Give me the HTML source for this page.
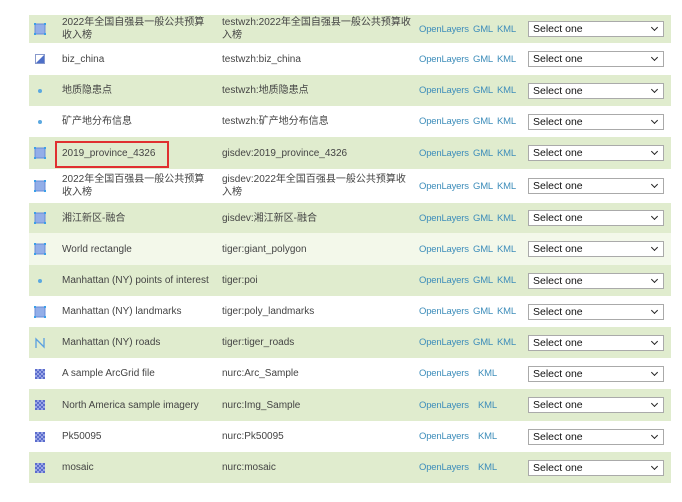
<!DOCTYPE html>
<html><head><meta charset="utf-8"><style>
body{margin:0;width:682px;height:502px;background:#fff;overflow:hidden;font-family:"Liberation Sans","Noto Sans CJK SC",sans-serif;font-size:10px;color:#444}
.r{position:absolute;left:29px;width:642px}
.g{background:#e0ecce}.p{background:#f3f8ea}
.c{position:absolute;top:0;bottom:0;display:flex;align-items:center;line-height:13px}
.n{left:33px;width:150px}.w{left:193px;width:190px}
.a{position:absolute;top:0;bottom:0;display:flex;align-items:center;color:#3d8dba;font-size:9.5px;letter-spacing:-0.2px}
.s{position:absolute;left:499px;width:136px;top:50%;margin-top:-8px;background:#fff;border:1px solid #aaa;font-size:10.5px;color:#111;line-height:14px;padding-left:4px;box-sizing:border-box;height:16px}
.s:after{content:"";position:absolute;right:6px;top:3px;width:4px;height:4px;border-right:1.6px solid #222;border-bottom:1.6px solid #222;transform:rotate(45deg)}
.i{position:absolute;left:5px;top:50%;margin-top:-6px}
</style></head><body>
<svg width="0" height="0" style="position:absolute"><defs>
<symbol id="poly" viewBox="0 0 12 12"><rect x="1" y="1" width="10" height="10" fill="#93aee8" stroke="#6a8bd6"/><g fill="#3aa0e8"><rect x="0" y="0" width="2" height="2"/><rect x="10" y="0" width="2" height="2"/><rect x="0" y="10" width="2" height="2"/><rect x="10" y="10" width="2" height="2"/></g></symbol>
<symbol id="pt" viewBox="0 0 12 12"><circle cx="6" cy="6" r="2" fill="#5aa8e0"/></symbol>
<symbol id="rs" viewBox="0 0 12 12"><rect x="1" y="1" width="10" height="10" fill="#9aa6e6"/><g fill="#5b6ccc"><rect x="1" y="1" width="2" height="2"/><rect x="5" y="1" width="2" height="2"/><rect x="9" y="1" width="2" height="2"/><rect x="3" y="3" width="2" height="2"/><rect x="7" y="3" width="2" height="2"/><rect x="1" y="5" width="2" height="2"/><rect x="5" y="5" width="2" height="2"/><rect x="9" y="5" width="2" height="2"/><rect x="3" y="7" width="2" height="2"/><rect x="7" y="7" width="2" height="2"/><rect x="1" y="9" width="2" height="2"/><rect x="5" y="9" width="2" height="2"/><rect x="9" y="9" width="2" height="2"/></g></symbol>
<symbol id="bz" viewBox="0 0 12 12"><rect x="1.5" y="1.5" width="9" height="9" fill="#fff" stroke="#8899cc"/><path d="M10 2V10H2Z" fill="#4d6fc8"/></symbol>
<symbol id="ln" viewBox="0 0 12 12"><path d="M2 11V2L10 10V1" fill="none" stroke="#5aa0e0" stroke-width="1.3"/></symbol>
</defs></svg>
<div style="position:absolute;left:55px;top:141px;width:110px;height:23px;border:2px solid #e03030;z-index:5"></div>

<div class="r g" style="top:15px;height:28px"><svg class="i" width="12" height="12"><use href="#poly"/></svg><div class="c n">2022年全国自强县一般公共预算收入榜</div><div class="c w">testwzh:2022年全国自强县一般公共预算收入榜</div><div class="a" style="left:390px">OpenLayers</div><div class="a" style="left:444px">GML</div><div class="a" style="left:468px">KML</div><div class="s">Select one</div></div>
<div class="r" style="top:43px;height:32px"><svg class="i" width="12" height="12"><use href="#bz"/></svg><div class="c n">biz_china</div><div class="c w">testwzh:biz_china</div><div class="a" style="left:390px">OpenLayers</div><div class="a" style="left:444px">GML</div><div class="a" style="left:468px">KML</div><div class="s">Select one</div></div>
<div class="r g" style="top:75px;height:31px"><svg class="i" width="12" height="12"><use href="#pt"/></svg><div class="c n">地质隐患点</div><div class="c w">testwzh:地质隐患点</div><div class="a" style="left:390px">OpenLayers</div><div class="a" style="left:444px">GML</div><div class="a" style="left:468px">KML</div><div class="s">Select one</div></div>
<div class="r" style="top:106px;height:31px"><svg class="i" width="12" height="12"><use href="#pt"/></svg><div class="c n">矿产地分布信息</div><div class="c w">testwzh:矿产地分布信息</div><div class="a" style="left:390px">OpenLayers</div><div class="a" style="left:444px">GML</div><div class="a" style="left:468px">KML</div><div class="s">Select one</div></div>
<div class="r g" style="top:137px;height:32px"><svg class="i" width="12" height="12"><use href="#poly"/></svg><div class="c n">2019_province_4326</div><div class="c w">gisdev:2019_province_4326</div><div class="a" style="left:390px">OpenLayers</div><div class="a" style="left:444px">GML</div><div class="a" style="left:468px">KML</div><div class="s">Select one</div></div>
<div class="r" style="top:169px;height:34px"><svg class="i" width="12" height="12"><use href="#poly"/></svg><div class="c n">2022年全国百强县一般公共预算收入榜</div><div class="c w">gisdev:2022年全国百强县一般公共预算收入榜</div><div class="a" style="left:390px">OpenLayers</div><div class="a" style="left:444px">GML</div><div class="a" style="left:468px">KML</div><div class="s">Select one</div></div>
<div class="r g" style="top:203px;height:30px"><svg class="i" width="12" height="12"><use href="#poly"/></svg><div class="c n">湘江新区-融合</div><div class="c w">gisdev:湘江新区-融合</div><div class="a" style="left:390px">OpenLayers</div><div class="a" style="left:444px">GML</div><div class="a" style="left:468px">KML</div><div class="s">Select one</div></div>
<div class="r p" style="top:233px;height:32px"><svg class="i" width="12" height="12"><use href="#poly"/></svg><div class="c n">World rectangle</div><div class="c w">tiger:giant_polygon</div><div class="a" style="left:390px">OpenLayers</div><div class="a" style="left:444px">GML</div><div class="a" style="left:468px">KML</div><div class="s">Select one</div></div>
<div class="r g" style="top:265px;height:31px"><svg class="i" width="12" height="12"><use href="#pt"/></svg><div class="c n">Manhattan (NY) points of interest</div><div class="c w">tiger:poi</div><div class="a" style="left:390px">OpenLayers</div><div class="a" style="left:444px">GML</div><div class="a" style="left:468px">KML</div><div class="s">Select one</div></div>
<div class="r" style="top:296px;height:31px"><svg class="i" width="12" height="12"><use href="#poly"/></svg><div class="c n">Manhattan (NY) landmarks</div><div class="c w">tiger:poly_landmarks</div><div class="a" style="left:390px">OpenLayers</div><div class="a" style="left:444px">GML</div><div class="a" style="left:468px">KML</div><div class="s">Select one</div></div>
<div class="r g" style="top:327px;height:31px"><svg class="i" width="12" height="12"><use href="#ln"/></svg><div class="c n">Manhattan (NY) roads</div><div class="c w">tiger:tiger_roads</div><div class="a" style="left:390px">OpenLayers</div><div class="a" style="left:444px">GML</div><div class="a" style="left:468px">KML</div><div class="s">Select one</div></div>
<div class="r" style="top:358px;height:31px"><svg class="i" width="12" height="12"><use href="#rs"/></svg><div class="c n">A sample ArcGrid file</div><div class="c w">nurc:Arc_Sample</div><div class="a" style="left:390px">OpenLayers</div><div class="a" style="left:449px">KML</div><div class="s">Select one</div></div>
<div class="r g" style="top:389px;height:32px"><svg class="i" width="12" height="12"><use href="#rs"/></svg><div class="c n">North America sample imagery</div><div class="c w">nurc:Img_Sample</div><div class="a" style="left:390px">OpenLayers</div><div class="a" style="left:449px">KML</div><div class="s">Select one</div></div>
<div class="r" style="top:421px;height:31px"><svg class="i" width="12" height="12"><use href="#rs"/></svg><div class="c n">Pk50095</div><div class="c w">nurc:Pk50095</div><div class="a" style="left:390px">OpenLayers</div><div class="a" style="left:449px">KML</div><div class="s">Select one</div></div>
<div class="r g" style="top:452px;height:31px"><svg class="i" width="12" height="12"><use href="#rs"/></svg><div class="c n">mosaic</div><div class="c w">nurc:mosaic</div><div class="a" style="left:390px">OpenLayers</div><div class="a" style="left:449px">KML</div><div class="s">Select one</div></div>
</body></html>
